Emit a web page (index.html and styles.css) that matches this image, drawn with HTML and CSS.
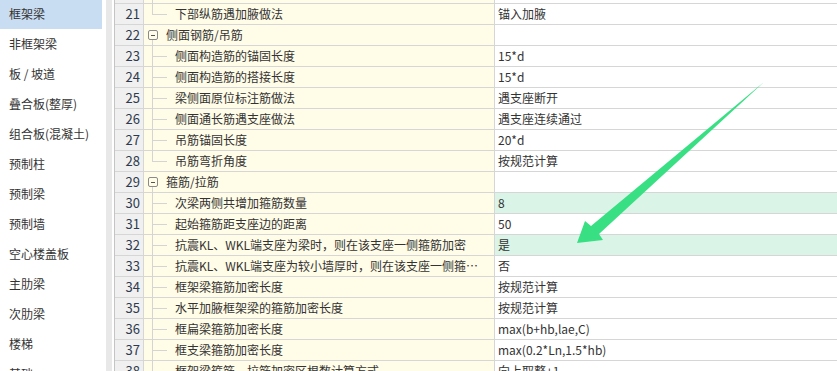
FILE: index.html
```html
<!DOCTYPE html>
<html lang="zh-CN">
  <head>
    <meta charset="UTF-8">
    <title>计算设置 - 框架梁</title>
    <link rel="stylesheet" href="styles.css">
  </head>
  <body>
    <div class="app">
      <nav class="sidebar">
        <ul class="type-list">
          <li class="is-active">框架梁</li>
          <li>非框架梁</li>
          <li>板 / 坡道</li>
          <li>叠合板(整厚)</li>
          <li>组合板(混凝土)</li>
          <li>预制柱</li>
          <li>预制梁</li>
          <li>预制墙</li>
          <li>空心楼盖板</li>
          <li>主肋梁</li>
          <li>次肋梁</li>
          <li>楼梯</li>
          <li>基础</li>
        </ul>
      </nav>
      <div class="splitter"></div>

      <main class="settings">
        <div class="row"><span class="num">20</span><span class="name"><i class="branch"></i><span class="label">上部纵筋遇加腋做法</span></span><span class="value">锚入加腋</span></div>
        <div class="row"><span class="num">21</span><span class="name"><i class="branch last"></i><span class="label">下部纵筋遇加腋做法</span></span><span class="value">锚入加腋</span></div>
        <div class="row"><span class="num">22</span><span class="name group"><i class="toggle"></i><span class="label">侧面钢筋/吊筋</span></span><span class="value"></span></div>
        <div class="row"><span class="num">23</span><span class="name"><i class="branch"></i><span class="label">侧面构造筋的锚固长度</span></span><span class="value">15*d</span></div>
        <div class="row"><span class="num">24</span><span class="name"><i class="branch"></i><span class="label">侧面构造筋的搭接长度</span></span><span class="value">15*d</span></div>
        <div class="row"><span class="num">25</span><span class="name"><i class="branch"></i><span class="label">梁侧面原位标注筋做法</span></span><span class="value">遇支座断开</span></div>
        <div class="row"><span class="num">26</span><span class="name"><i class="branch"></i><span class="label">侧面通长筋遇支座做法</span></span><span class="value">遇支座连续通过</span></div>
        <div class="row"><span class="num">27</span><span class="name"><i class="branch"></i><span class="label">吊筋锚固长度</span></span><span class="value">20*d</span></div>
        <div class="row"><span class="num">28</span><span class="name"><i class="branch last"></i><span class="label">吊筋弯折角度</span></span><span class="value">按规范计算</span></div>
        <div class="row"><span class="num">29</span><span class="name group"><i class="toggle"></i><span class="label">箍筋/拉筋</span></span><span class="value"></span></div>
        <div class="row"><span class="num">30</span><span class="name"><i class="branch"></i><span class="label">次梁两侧共增加箍筋数量</span></span><span class="value is-changed">8</span></div>
        <div class="row"><span class="num">31</span><span class="name"><i class="branch"></i><span class="label">起始箍筋距支座边的距离</span></span><span class="value">50</span></div>
        <div class="row"><span class="num">32</span><span class="name"><i class="branch"></i><span class="label">抗震KL、WKL端支座为梁时，则在该支座一侧箍筋加密</span></span><span class="value is-changed">是</span></div>
        <div class="row"><span class="num">33</span><span class="name"><i class="branch"></i><span class="label">抗震KL、WKL端支座为较小墙厚时，则在该支座一侧箍筋加密</span></span><span class="value">否</span></div>
        <div class="row"><span class="num">34</span><span class="name"><i class="branch"></i><span class="label">框架梁箍筋加密长度</span></span><span class="value">按规范计算</span></div>
        <div class="row"><span class="num">35</span><span class="name"><i class="branch"></i><span class="label">水平加腋框架梁的箍筋加密长度</span></span><span class="value">按规范计算</span></div>
        <div class="row"><span class="num">36</span><span class="name"><i class="branch"></i><span class="label">框扁梁箍筋加密长度</span></span><span class="value">max(b+hb,lae,C)</span></div>
        <div class="row"><span class="num">37</span><span class="name"><i class="branch"></i><span class="label">框支梁箍筋加密长度</span></span><span class="value">max(0.2*Ln,1.5*hb)</span></div>
        <div class="row"><span class="num">38</span><span class="name"><i class="branch"></i><span class="label">框架梁箍筋、拉筋加密区根数计算方式</span></span><span class="value">向上取整+1</span></div>
      </main>

      <svg class="pointer" viewBox="0 0 837 371" width="837" height="371" aria-hidden="true">
        <polygon points="577,243 585,221 591,226 764,82 599,234 603,240" fill="#38e083"/>
      </svg>
    </div>
  </body>
</html>
```

FILE: styles.css
```css
*,
*::after,
*::before {
  box-sizing: border-box;
}

html,
body {
  margin: 0;
  height: 371px;
  overflow: hidden;
  background: #fff;
}

body {
  font-family: "Noto Sans CJK SC", "Noto Sans", sans-serif;
  font-size: 12px;
  color: #333;
}

.app {
  position: relative;
  display: flex;
  height: 371px;
  overflow: hidden;
}

/* left type list */
.sidebar {
  flex: none;
  width: 102px;
}

.type-list {
  list-style: none;
  margin: -1px 0 0;
  padding: 0;
}

.type-list li {
  height: 30px;
  line-height: 30px;
  padding-left: 9px;
  white-space: nowrap;
  font-size: 12px;
  color: #333;
}

.type-list .is-active {
  background: #c9ddf2;
}

.splitter {
  flex: none;
  width: 12px;
  border-left: 4px solid #fff;
  border-right: 2px solid #fff;
  background: #e8e8e8;
}

/* settings grid */
.settings {
  flex: 1;
  min-width: 0;
  margin-top: -17px;
  border-left: 1px solid #c4c4c4;
}

.row {
  display: grid;
  grid-template-columns: 29px 351px 1fr;
  height: 21px;
  border-bottom: 1px solid #d6d6d6;
}

.num {
  padding-right: 3px;
  text-align: right;
  font-size: 13px;
  line-height: 20px;
  color: #2f3a4e;
  background: #f0f0f0;
  border-right: 1px solid #d6d6d6;
}

.name {
  display: flex;
  align-items: stretch;
  min-width: 0;
  padding-left: 8px;
  background: #fffce8;
  border-right: 1px solid #d6d6d6;
}

.name .label {
  flex: 1;
  min-width: 0;
  line-height: 20px;
  overflow: hidden;
  white-space: nowrap;
  text-overflow: ellipsis;
  margin-right: 4px;
}

.branch {
  flex: none;
  width: 15px;
  margin-right: 8px;
  margin-bottom: -1px;
  background:
    linear-gradient(#d4d4d4, #d4d4d4) no-repeat 0 0 / 1px 100%,
    linear-gradient(#d4d4d4, #d4d4d4) no-repeat 0 10px / 100% 1px;
}

.branch.last {
  margin-bottom: 0;
  background:
    linear-gradient(#d4d4d4, #d4d4d4) no-repeat 0 0 / 1px 11px,
    linear-gradient(#d4d4d4, #d4d4d4) no-repeat 0 10px / 100% 1px;
}

.name.group {
  padding-left: 4px;
}

.toggle {
  position: relative;
  flex: none;
  align-self: center;
  width: 10px;
  height: 10px;
  margin-right: 8px;
  border: 1px solid #8a8a8a;
  border-radius: 2px;
  background: linear-gradient(#555, #555) no-repeat center / 4px 1px;
}

.toggle::after {
  content: "";
  position: absolute;
  left: 3px;
  top: 9px;
  width: 1px;
  height: 6px;
  background: #d4d4d4;
}

.value {
  padding-left: 3px;
  line-height: 20px;
  white-space: nowrap;
  overflow: hidden;
}

.value.is-changed {
  background: #daf5e8;
}

/* annotation arrow drawn over the grid */
.pointer {
  position: absolute;
  top: 0;
  left: 0;
  pointer-events: none;
}
```
